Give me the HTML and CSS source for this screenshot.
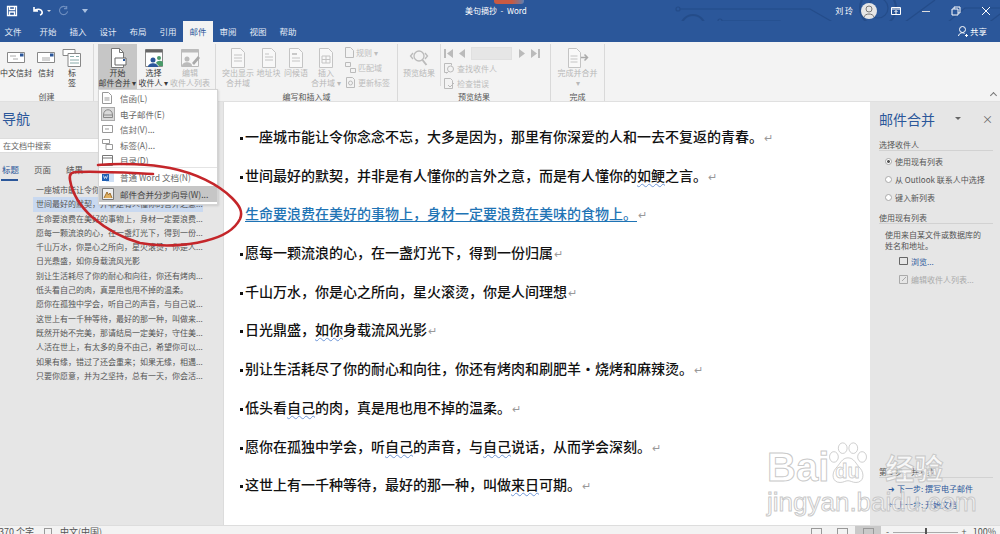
FILE: index.html
```html
<!DOCTYPE html>
<html lang="zh-CN">
<head>
<meta charset="utf-8">
<title>美句摘抄 - Word</title>
<link rel="stylesheet" href="styles.css">
</head>
<body>
<div class="app">
  <header class="title-bar">
    <svg class="circuit" width="1000" height="42" viewBox="0 0 1000 42" fill="none" stroke="#234a86" stroke-width="1.2">
      <path d="M680 9H810L850 32H900"/><circle cx="678" cy="9" r="2"/>
      <path d="M722 21H780L815 41"/><circle cx="720" cy="21" r="2"/>
      <path d="M670 39H740"/><circle cx="693" cy="27" r="12" stroke-width="2"/><path d="M689 23h7v7M689 23l9 10"/>
      <circle cx="878" cy="8" r="18" stroke-width="2"/><circle cx="878" cy="8" r="10"/>
      <path d="M905 22L935 0M925 41L965 8H1000M965 41L1000 14"/>
    </svg>
    <div class="quick">
      <svg width="12" height="12" viewBox="0 0 12 12" fill="none" stroke="#fff" stroke-width="1.3"><path d="M1.5 1.5h9v9h-9zM3.5 1.5v3h5v-3M3.5 10.5v-3.500h5v3.500"/></svg>
      <svg class="undo" width="12" height="12" viewBox="0 0 12 12" fill="none" stroke="#fff" stroke-width="1.6"><path d="M2 2v4h4M2 6c2-2.500 7-2.500 8 .5 .5 1.500-.5 3-2 3.500"/></svg>
      <span class="caret-w"></span>
      <svg class="redo" width="11" height="11" viewBox="0 0 12 12" fill="none" stroke="#6f8fc0" stroke-width="1.2"><path d="M9.500 3A4.500 4.500 0 1 0 10.500 7M9.500 1v3h-3"/></svg>
      <span class="caret-q"></span>
    </div>
    <div class="doc-title"><span class="red-tag"></span>美句摘抄&nbsp; - &nbsp;Word</div>
    <div class="window-tools">
      <span class="user">刘 玲</span>
      <svg class="avatar" width="16" height="16" viewBox="0 0 16 16"><circle cx="8" cy="8" r="8" fill="#e6e6e6"/><circle cx="8" cy="6" r="3" fill="none" stroke="#777" stroke-width="1"/><path d="M3 14c1-4 9-4 10 0" fill="none" stroke="#777" stroke-width="1"/></svg>
      <svg class="win-btn" width="10" height="10" viewBox="0 0 10 10" fill="none" stroke="#fff"><path d="M.5 1.500h9v7h-9zM.5 3h9"/><path d="M5 8V4.500M3.500 6L5 4.500 6.500 6"/></svg>
      <svg class="win-btn" width="10" height="10" viewBox="0 0 10 10" stroke="#ddd"><path d="M1 5.500h8"/></svg>
      <svg class="win-btn" width="10" height="10" viewBox="0 0 10 10" fill="none" stroke="#fff"><path d="M1 3h6v6H1zM3 3V1h6v6H7"/></svg>
      <svg class="win-btn" width="10" height="10" viewBox="0 0 10 10" stroke="#fff"><path d="M1 1l8 8M9 1l-8 8"/></svg>
    </div>
  </header>
  <nav class="tabs">
    <span class="tab tab-file">文件</span>
    <span class="tab">开始</span>
    <span class="tab">插入</span>
    <span class="tab">设计</span>
    <span class="tab">布局</span>
    <span class="tab">引用</span>
    <span class="tab tab-active">邮件</span>
    <span class="tab">审阅</span>
    <span class="tab">视图</span>
    <span class="tab">帮助</span>
    <span class="share">
      <svg width="10" height="11" viewBox="0 0 10 11" fill="none" stroke="#fff"><circle cx="4.500" cy="3.500" r="3"/><path d="M.5 10c.5-3 4-4 6-2.500M7 9.500h3M8.500 8v3"/></svg>
      共享
    </span>
  </nav>
  <section class="ribbon">
    <div class="group g1">
      <div class="group-body">
        <div class="rb w32"><svg class="ri" width="20" height="20" viewBox="0 0 20 20"><path d="M1.500 4.500h17v10h-17z" fill="#fff" stroke="#888"/><path d="M14 5.500h3.500v3H14z" fill="#2b579a"/><path d="M4 8h6M7 11h5" stroke="#aaa"/></svg><span>中文信封</span></div>
        <div class="rb w28"><svg class="ri" width="20" height="20" viewBox="0 0 20 20"><path d="M1.500 4.500h17v10h-17z" fill="#fff" stroke="#888"/><path d="M14 5.500h3.500v3H14z" fill="#2b579a"/><path d="M6 10h8M6 12h8" stroke="#aaa"/></svg><span>信封</span></div>
        <div class="rb w24"><svg class="ri" width="20" height="20" viewBox="0 0 20 20" fill="#fff" stroke="#888"><path d="M1 1.500h12v6H1z"/><path d="M6 5.500h12.500v13H6z"/><path d="M8 8.500h4M14 8.500h3M8 12h9M8 15h9" stroke="#8aa"/></svg><span>标<br>签</span></div>
      </div>
      <div class="group-label">创建</div>
    </div>
    <div class="group g2">
      <div class="group-body">
        <div class="rb rb-on w39"><svg class="ri" width="20" height="20" viewBox="0 0 20 20"><path d="M3.500 .5h8l4 4v15h-12z" fill="#fff" stroke="#777"/><path d="M11.500 .5v4h4" fill="none" stroke="#777"/><path d="M7 10h11v7H7z" fill="#fff" stroke="#666"/><path d="M15 11h2v2h-2z" fill="#2b579a"/></svg><span>开始<br>邮件合并 ▾</span></div>
        <div class="rb w33"><svg class="ri" width="20" height="20" viewBox="0 0 20 20"><path d="M1.500 1.500h17v17h-17z" fill="#fff" stroke="#888"/><path d="M1.500 1.500h17v3h-17z" fill="#666"/><circle cx="9" cy="12" r="2.500" fill="#2b579a"/><path d="M4 19c0-5 10-5 10 0z" fill="#2b579a"/><circle cx="15" cy="10" r="2" fill="#4a9a6a"/><path d="M12 15c1-3 7-3 7 0v3h-4z" fill="#4a9a6a"/></svg><span>选择<br>收件人 ▾</span></div>
        <div class="rb rb-off w40"><svg class="ri" width="20" height="20" viewBox="0 0 20 20"><path d="M1.500 1.500h17v17h-17z" fill="#f6f6f6" stroke="#bbb"/><path d="M1.500 1.500h17v3h-17z" fill="#bbb"/><circle cx="7" cy="11" r="2.500" fill="#bbb"/><path d="M2 18c0-5 10-5 10 0z" fill="#bbb"/><path d="M12 15l6-7 2 2-6 7z" fill="#aaa"/></svg><span>编辑<br>收件人列表</span></div>
      </div>
      <div class="group-label">&nbsp;</div>
    </div>
    <div class="group g3">
      <div class="group-body">
        <div class="rb rb-off w32"><svg class="ri" width="20" height="20" viewBox="0 0 20 20" fill="none" stroke="#c4c4c4"><path d="M3.500 .5h9l4 4v15h-13z" fill="#f8f8f8"/><path d="M6 7h8M6 10h8M6 13h8"/></svg><span>突出显示<br>合并域</span></div>
        <div class="rb rb-off w29"><svg class="ri" width="20" height="20" viewBox="0 0 20 20" fill="none" stroke="#c4c4c4"><path d="M3.500 .5h9l4 4v15h-13z" fill="#f8f8f8"/><path d="M6 6h4M6 9h8M6 12h8"/></svg><span>地址块</span></div>
        <div class="rb rb-off w26"><svg class="ri" width="20" height="20" viewBox="0 0 20 20" fill="none" stroke="#c4c4c4"><path d="M3.500 .5h9l4 4v15h-13z" fill="#f8f8f8"/><path d="M6 6h5" stroke="#999"/><path d="M6 10h8M6 13h8"/></svg><span>问候语</span></div>
        <div class="rb rb-off w34"><svg class="ri" width="20" height="20" viewBox="0 0 20 20" fill="none" stroke="#c4c4c4"><path d="M3.500 .5h9l4 4v15h-13z" fill="#f8f8f8"/><path d="M6 8h8v7H6zM10 8v7M6 11.500h8"/></svg><span>插入<br>合并域 ▾</span></div>
        <div class="rb-col">
          <div class="rb-row"><svg width="9" height="11" viewBox="0 0 9 11" fill="none" stroke="#bbb"><path d="M.5.5h5l3 3v7h-8z"/></svg><span>规则 ▾</span></div>
          <div class="rb-row"><svg width="11" height="11" viewBox="0 0 11 11" fill="none" stroke="#bbb"><path d="M.5.5h5v4h-5zM5.500 6.500h5v4h-5z"/></svg><span>匹配域</span></div>
          <div class="rb-row"><svg width="11" height="11" viewBox="0 0 11 11" fill="none" stroke="#bbb"><path d="M1.500.5h6l2 2v8h-8z"/><circle cx="5.500" cy="6" r="2"/></svg><span>更新标签</span></div>
        </div>
      </div>
      <div class="group-label">编写和插入域</div>
    </div>
    <div class="group g4">
      <div class="group-body">
        <div class="rb rb-off w34 sep-right"><svg class="ri" width="20" height="20" viewBox="0 0 20 20" fill="none" stroke="#bbb" stroke-width="1.300"><circle cx="10" cy="8" r="5"/><path d="M13.500 12l4 5" stroke-width="2"/><path d="M4 5L1.500 8 4 11M16 5l2.500 3L16 11"/></svg><span>预览结果</span></div>
        <div class="rb-col col-preview">
          <div class="pager">
            <svg width="9" height="9" viewBox="0 0 9 9" fill="#bbb"><path d="M0 0h2v9H0zM9 0v9L3 4.500z"/></svg>
            <svg class="pg-prev" width="7" height="9" viewBox="0 0 7 9" fill="#bbb"><path d="M6 0v9L0 4.500z"/></svg>
            <span class="pg-box"></span>
            <svg class="pg-next" width="7" height="9" viewBox="0 0 7 9" fill="#bbb"><path d="M1 0v9l6-4.500z"/></svg>
            <svg class="pg-last" width="9" height="9" viewBox="0 0 9 9" fill="#bbb"><path d="M7 0h2v9H7zM0 0v9l6-4.500z"/></svg>
          </div>
          <div class="rb-row"><svg width="11" height="11" viewBox="0 0 11 11" fill="none" stroke="#bbb"><path d="M.5.5h7v2M.5.5v9h3"/><circle cx="6.500" cy="6" r="3"/><path d="M4.500 8.500l-2 2"/></svg><span>查找收件人</span></div>
          <div class="rb-row"><svg width="11" height="11" viewBox="0 0 11 11" fill="none" stroke="#bbb"><path d="M.5.5h6l2 2v8h-8z"/><path d="M4 7l2 2 4-4"/></svg><span>检查错误</span></div>
        </div>
      </div>
      <div class="group-label">预览结果</div>
    </div>
    <div class="group g5">
      <div class="group-body">
        <div class="rb rb-off w52"><svg class="ri wide" width="22" height="20" viewBox="0 0 22 20" fill="none" stroke="#c4c4c4"><path d="M1.500 .5h8l4 4v15h-12z" fill="#f8f8f8"/><path d="M3.500 8h7M3.500 11h7M3.500 14h7"/><path d="M14 9.500h6M17.500 6.500l3 3-3 3" stroke="#aaa" stroke-width="1.500"/></svg><span>完成并合并<br>▾</span></div>
      </div>
      <div class="group-label">完成</div>
    </div>
    <span class="collapse"></span>
  </section>

  <main class="workspace">
    <aside class="nav-pane">
      <h2 class="nav-title">导航</h2>
      <div class="search">在文档中搜索</div>
      <div class="nav-tabs"><span class="nav-tab nav-tab-on">标题</span><span class="nav-tab">页面</span><span class="nav-tab">结果</span></div>
      <ul class="heads">
        <li>一座城市能让令你念念不忘，大多是因为，那里...</li>
        <li class="head-on">世间最好的默契，并非是有人懂你的言外之意...</li>
        <li>生命要浪费在美好的事物上，身材一定要浪费...</li>
        <li>愿每一颗流浪的心，在一盏灯光下，得到一份...</li>
        <li>千山万水，你是心之所向，星火滚烫，你是人...</li>
        <li>日光鼎盛，如你身载流风光影</li>
        <li>别让生活耗尽了你的耐心和向往，你还有烤肉...</li>
        <li>低头看自己的肉，真是甩也甩不掉的温柔。</li>
        <li>愿你在孤独中学会，听自己的声音，与自己说...</li>
        <li>这世上有一千种等待，最好的那一种，叫做来...</li>
        <li>既然开始不完美，那请结局一定美好，守住美...</li>
        <li>人活在世上，有太多的身不由己，希望你可以...</li>
        <li>如果有缘，错过了还会重来；如果无缘，相遇...</li>
        <li>只要你愿意，并为之坚持，总有一天，你会活...</li>
      </ul>
    </aside>
    <article class="doc">
      <p>一座城市能让令你念念不忘，大多是因为，那里有你深爱的人和一去不复返的青春。<i>↵</i></p>
      <p>世间最好的默契，并非是有人懂你的言外之意，而是有人懂你的<u>如鲠</u>之言。<i>↵</i></p>
      <p class="link-line"><b>生命要浪费在美好的事物上，身材一定要浪费在美味的食物上。</b><i>↵</i></p>
      <p>愿每一颗流浪的心，在一盏灯光下，得到一份归属<i>↵</i></p>
      <p>千山万水，你是心之所向，星火滚烫，你是人间理想<i>↵</i></p>
      <p>日光鼎盛，<u>如你</u>身载流风光影<i>↵</i></p>
      <p>别让生活耗尽了你的耐心和向往，你还有烤肉和刷肥羊·烧烤和麻辣烫。<i>↵</i></p>
      <p>低头看<u>自己</u>的肉，真是甩也甩不掉的温柔。<i>↵</i></p>
      <p>愿你在孤独中学会，听<u>自己</u>的声音，与<u>自己</u>说话，从而学会深刻。<i>↵</i></p>
      <p>这世上有一千种等待，最好的那一种，叫做<u>来日</u>可期。<i>↵</i></p>
    </article>
    <aside class="task-pane">
      <div class="task-head"><h2>邮件合并</h2><span class="task-caret"></span><span class="task-close">×</span></div>
      <div class="task-section">选择收件人</div>
      <div class="radio radio-on"><span></span>使用现有列表</div>
      <div class="radio"><span></span>从 Outlook 联系人中选择</div>
      <div class="radio"><span></span>键入新列表</div>
      <div class="task-section second">使用现有列表</div>
      <p class="task-desc">使用来自某文件或数据库的<br>姓名和地址。</p>
      <div class="task-link"><svg width="9" height="8" viewBox="0 0 9 8" fill="none" stroke="#666"><path d="M.5.5h8v7h-8z"/></svg>浏览...</div>
      <div class="task-link off"><svg width="9" height="9" viewBox="0 0 9 9" fill="none" stroke="#aaa"><path d="M.5.5h8v8h-8zM3 6l4-4"/></svg>编辑收件人列表...</div>
      <div class="task-foot">
        <div class="task-section">第 3 步，共 6 步</div>
        <div class="step"><em>➜</em>下一步: 撰写电子邮件</div>
        <div class="step"><em>←</em>上一步: 开始文档</div>
      </div>
    </aside>
  </main>

  <footer class="status">
    <span class="st-words">370 个字</span>
    <span class="st-book"></span>
    <span class="st-lang">中文(中国)</span>
    <div class="st-right">
      <span class="view"></span><span class="view"></span><span class="view view-on"></span>
      <span class="zoom-minus">-</span><span class="slider"><span class="thumb"></span></span><span class="zoom-plus">+</span>
      <span class="zoom-val">100%</span>
    </div>
  </footer>

  <div class="menu">
    <div class="mi"><svg width="10" height="12" viewBox="0 0 10 12" fill="#fff" stroke="#999"><path d="M.5.5h6l3 3v8h-9z"/><path d="M2.500 6h5M2.500 8h5"/></svg><span>信函(L)</span></div>
    <div class="mi"><svg class="mi-boxed" width="12" height="12" viewBox="0 0 12 12" fill="none" stroke="#888"><path d="M1.500 7c0-7 9-7 9 0v2.500h-9zM1.500 7h9"/></svg><span>电子邮件(E)</span></div>
    <div class="mi"><svg width="11" height="8" viewBox="0 0 11 8" fill="#fff" stroke="#999"><path d="M.5.5h10v7H.5zM3 4h4"/></svg><span>信封(V)...</span></div>
    <div class="mi"><svg width="11" height="11" viewBox="0 0 11 11" fill="#fff" stroke="#999"><path d="M.5.5h7v4h-7zM4 5.500h6.500v5H4z"/></svg><span>标签(A)...</span></div>
    <div class="mi mi-end"><svg width="11" height="11" viewBox="0 0 11 11" fill="#fff" stroke="#777"><path d="M.5.5h10v10H.5zM.5 3h10"/></svg><span>目录(D)</span></div>
    <div class="mi"><svg width="12" height="11" viewBox="0 0 12 11"><path d="M4 1h8v9H4z" fill="#cfe0f5"/><path d="M0 2h7v7H0z" fill="#1f5fb4"/><path d="M1.500 3.500l1 3 1-2 1 2 1-3" fill="none" stroke="#fff" stroke-width=".7"/></svg><span>普通 Word 文档(N)</span></div>
    <div class="mi mi-on"><svg width="12" height="12" viewBox="0 0 12 12" fill="#eee" stroke="#777"><path d="M.5.5h11v11H.5z"/><path d="M2 10l3-6 1.500 3L8 5l2 5" fill="#e0b060" stroke="#a07030"/></svg><span>邮件合并分步向导(W)...</span></div>
  </div>

  <svg class="scribble" width="260" height="260" viewBox="0 0 260 260" fill="none">
    <path d="M98 165C120 163 150 164 170 168C195 173 218 184 232 198C240 206 243 212 240 219C235 229 222 237 205 241C185 246 160 247 140 243C122 238 105 228 92 217C80 206 72 192 70 180C69 174 71 172 78 172C100 171 130 173 153 174" stroke="#c4262a" stroke-width="2.600" stroke-linecap="round"/>
  </svg>

  <div class="watermark">
    <div class="wm-top">
      <span class="wm-bai">Bai</span>
      <div class="wm-paw">
        <svg width="44" height="44" viewBox="0 0 50 50" fill="rgba(255,255,255,.7)" stroke="rgba(195,195,195,.9)"><ellipse cx="9" cy="17" rx="5" ry="6"/><ellipse cx="19" cy="7" rx="5" ry="6"/><ellipse cx="31" cy="7" rx="5" ry="6"/><ellipse cx="41" cy="17" rx="5" ry="6"/><path d="M25 18c-7 0-9 7-14 12-5 6-4 16 5 16 4 0 6-2 9-2s5 2 9 2c9 0 10-10 5-16-5-5-7-12-14-12z"/></svg>
        <span class="wm-du">du</span>
      </div>
      <span class="wm-cn">经验</span>
    </div>
    <div class="wm-url">jingyan.baidu.com</div>
  </div>
</div>
</body>
</html>
```
FILE: styles.css
```css
* { box-sizing: border-box; }
html, body { margin: 0; padding: 0; }
body { font-family: "Noto Sans CJK SC", "Liberation Sans", sans-serif; color: #444; background: #fff; }
.app { position: relative; width: 1000px; height: 534px; overflow: hidden; display: flex; flex-direction: column; }
ul, h2, p { margin: 0; padding: 0; }

.title-bar { position: relative; height: 21px; flex: none; background: #2b579a; color: #fff; display: flex; align-items: center; }
.circuit { position: absolute; left: 0; top: 0; opacity: .8; }
.quick { position: relative; width: 200px; display: flex; align-items: center; padding-left: 6px; }
.undo { margin-left: 14px; }
.caret-w { width: 0; height: 0; border: 2px solid transparent; border-top: 2px solid #ddd; margin: 2px 0 0 3px; }
.redo { margin-left: 7px; }
.caret-q { width: 0; height: 0; border: 3px solid transparent; border-top: 4px solid #a9c0e0; margin: 3px 0 0 13px; }
.doc-title { position: relative; margin-left: 265px; font-size: 8px; line-height: 21px; white-space: nowrap; }
.red-tag { position: absolute; left: 29px; top: 0; width: 30px; height: 4px; border-radius: 0 0 3px 3px; background: linear-gradient(90deg, #c85a42 60%, #5f7fb0); }
.window-tools { position: absolute; right: 0; top: 0; height: 21px; display: flex; align-items: center; }
.user { font-size: 8px; position: relative; }
.avatar { margin: 0 14px 0 8px; position: relative; }
.win-btn { position: relative; margin-right: 20px; }
.win-btn:last-child { margin-right: 9px; }

.tabs { position: relative; height: 21px; flex: none; background: #2b579a; display: flex; align-items: stretch; font-size: 8.500px; color: #e4ebf6; }
.tab { width: 30px; line-height: 21px; text-align: center; position: relative; }
.tab-file { width: 26px; margin-right: 7px; }
.tab-active { background: #f3f3f3; color: #2b579a; }
.share { position: absolute; right: 13px; top: 0; line-height: 21px; display: flex; align-items: center; gap: 2px; color: #fff; }

.ribbon { position: relative; flex: none; height: 60px; background: #f3f3f3; display: flex; border-bottom: 1px solid #e0e0e0; font-size: 8px; line-height: 10px; }
.group { flex: none; display: flex; flex-direction: column; margin-top: 2px; height: 57px; border-right: 1px solid #d9d9d9; }
.group-body { height: 45px; display: flex; }
.group-label { text-align: center; height: 12px; line-height: 15px; color: #555; font-size: 8px; }
.g1 { width: 94px; }
.g2 { width: 122px; padding-left: 4px; }
.g3 { width: 182px; padding-left: 6px; }
.g3 .group-label { margin-left: -6px; }
.g4 { width: 153px; padding-left: 4px; }
.g4 .group-label { margin-left: -4px; }
.g5 { width: 54px; border-right: 1px solid #d9d9d9; }
.rb { flex: none; height: 45px; display: flex; flex-direction: column; align-items: center; padding-top: 4px; text-align: center; white-space: nowrap; color: #3a3a3a; }
.ri { flex: none; margin-bottom: 0; }
.rb-on { background: #c6c6c6; }
.rb-off { color: #b8b8b8; }
.w24 { width: 24px; } .w26 { width: 26px; } .w28 { width: 28px; } .w29 { width: 29px; }
.w32 { width: 32px; } .w33 { width: 33px; } .w34 { width: 34px; } .w39 { width: 39px; } .w40 { width: 40px; } .w52 { width: 53px; }
.rb-col { display: flex; flex-direction: column; margin-left: 2px; padding-top: 3px; gap: 4px; color: #bdbdbd; }
.rb-row { height: 11px; display: flex; align-items: center; gap: 2px; white-space: nowrap; }
.col-preview { margin-left: 4px; padding-left: 3px; border-left: 1px solid #dcdcdc; height: 42px; gap: 4px; }
.pager { height: 12px; display: flex; align-items: center; }
.pg-prev { margin-left: 6px; }
.pg-box { width: 41px; height: 13px; margin-left: 5px; background: #e6e6e6; border: 1px solid #e0e0e0; }
.pg-next { margin-left: 6px; }
.pg-last { margin-left: 6px; }
.collapse { position: absolute; right: 4px; bottom: 3px; width: 5px; height: 5px; border-left: 1px solid #777; border-top: 1px solid #777; transform: rotate(45deg); }

.workspace { flex: 1; min-height: 0; display: flex; }
.nav-pane { width: 224px; flex: none; background: #e6e6e6; border-right: 1px solid #dcdcdc; padding-top: 6px; }
.nav-title { font-size: 14px; line-height: 20px; font-weight: 400; color: #2b579a; padding-left: 2px; }
.search { margin-top: 10px; width: 110px; height: 15px; background: #fff; border: 1px solid #ddd; border-left: 0; font-size: 8px; line-height: 13px; padding-left: 3px; color: #666; }
.nav-tabs { display: flex; margin-top: 10px; font-size: 8.500px; line-height: 12px; color: #555; }
.nav-tab { width: 32px; padding-left: 2px; height: 18px; }
.nav-tab-on { color: #2b579a; position: relative; }
.nav-tab-on::after { content: ""; position: absolute; left: 1px; top: 16px; width: 17px; height: 2px; background: #2b579a; }
.heads { list-style: none; margin-top: 2px; font-size: 8px; line-height: 14.300px; color: #555; }
.heads li { padding-left: 36px; white-space: nowrap; height: 14.300px; }
.heads .head-on { background: #c9d9f0; margin: 0 20px 0 33px; padding-left: 3px; }

.doc { flex: 1; min-width: 0; background: #fff; padding-top: 15px; color: #111; font-size: 14px; font-weight: 500; overflow: hidden; }
.doc p { position: relative; height: 38.700px; line-height: 38.700px; padding-left: 21px; white-space: nowrap; }
.doc p::before { content: ""; position: absolute; left: 16px; top: 20px; width: 3px; height: 3px; background: #111; }
.doc i { font-style: normal; font-weight: 400; color: #999; font-size: 11px; margin-left: 1px; }
.doc u { text-decoration: underline wavy #6f96d6 1px; text-underline-offset: 2px; }
.link-line b { font-weight: 500; color: #1f74b5; text-decoration: underline; text-underline-offset: 2px; }
.doc .link-line::before { background: #fff; }

.task-pane { width: 130px; flex: none; background: #e6e6e6; padding: 0 7px 0 9px; font-size: 8px; color: #555; position: relative; }
.task-head { display: flex; align-items: center; height: 32px; padding-top: 2px; }
.task-head h2 { font-size: 14px; font-weight: 400; color: #2b579a; width: 78px; }
.task-caret { width: 0; height: 0; border: 3px solid transparent; border-top: 3px solid #666; margin-top: 2px; }
.task-close { margin-left: 21px; font-size: 11px; color: #666; }
.task-section { line-height: 11px; height: 12px; margin-top: 5px; border-bottom: 1px solid #d2d2d2; white-space: nowrap; }
.task-section.second { margin-top: 6px; }
.radio { display: flex; align-items: center; height: 18px; margin-left: 6px; white-space: nowrap; }
.task-section + .radio { margin-top: 1px; }
.radio span { width: 7px; height: 7px; border-radius: 50%; border: 1px solid #aaa; background: #fff; flex: none; margin-right: 3px; }
.radio-on span { background: radial-gradient(circle, #555 35%, #fff 45%); }
.task-desc { margin: 6px 0 0 6px; line-height: 10.500px; }
.task-link { display: flex; align-items: center; gap: 3px; margin: 4px 0 0 20px; height: 12px; white-space: nowrap; color: #2b579a; }
.task-link.off { margin-top: 6px; color: #aaa; }
.task-foot { position: absolute; left: 9px; right: 7px; bottom: 12px; }
.task-foot .task-section { margin-bottom: 3px; height: 13px; line-height: 13px; }
.step { line-height: 16px; color: #2b579a; padding-left: 11px; white-space: nowrap; display: flex; }
.step em { font-style: normal; width: 9px; margin-left: -2px; font-size: 8px; }

.status { flex: none; position: relative; height: 9px; background: #f3f3f3; border-top: 1px solid #ddd; font-size: 9px; line-height: 12px; color: #555; display: flex; }
.st-words { margin-left: -1px; width: 45px; white-space: nowrap; }
.st-book { width: 8px; height: 8px; margin: 2px 0 0 0; border: 1px solid #999; }
.st-lang { margin-left: 8px; white-space: nowrap; }
.st-right { position: absolute; right: 4px; top: 0; display: flex; align-items: flex-start; }
.view { width: 26px; height: 9px; position: relative; }
.view::after { content: ""; position: absolute; left: 8px; top: 2px; width: 9px; height: 7px; border: 1px solid #999; }
.view-on { background: #c9c9c9; }
.zoom-minus { margin-left: 5px; width: 7px; }
.slider { position: relative; width: 65px; height: 1px; margin-top: 6px; background: #aaa; }
.thumb { position: absolute; left: 32px; top: -4px; width: 2px; height: 9px; background: #555; }
.zoom-plus { width: 12px; text-align: center; }
.zoom-val { width: 26px; text-align: right; }

.menu { position: absolute; left: 98px; top: 89px; width: 120px; height: 116px; background: #fff; border: 1px solid #d4d4d4; box-shadow: 1px 1px 2px rgba(0,0,0,.12); font-size: 8.500px; color: #666; display: flex; flex-direction: column; }
.mi { flex: none; height: 15.700px; display: flex; align-items: center; white-space: nowrap; position: relative; }
.mi svg { position: absolute; left: 3px; }
.mi span { padding-left: 21px; }
.mi-boxed { background: #d9d9d9; outline: 1px solid #aaa; }
.mi-end { margin-bottom: 1px; border-bottom: 1px solid #e4e4e4; }
.mi-on { background: #c6c6c6; color: #444; height: 16px; margin: 1px 0 0 0; }

.scribble { position: absolute; left: 0; top: 0; pointer-events: none; }

.watermark { position: absolute; left: 767px; top: 442px; width: 200px; pointer-events: none; }
.wm-top { display: flex; align-items: flex-start; height: 46px; }
.wm-bai { font-family: "Liberation Sans", sans-serif; font-size: 40px; line-height: 50px; font-weight: 700; color: rgba(255,255,255,.75); -webkit-text-stroke: 1px rgba(195,195,195,.9); }
.wm-paw { position: relative; width: 44px; height: 44px; margin-left: -3px; flex: none; }
.wm-du { position: absolute; left: 9px; top: 17px; font-family: "Liberation Sans", sans-serif; font-size: 20px; line-height: 24px; font-weight: 700; color: rgba(255,255,255,.6); -webkit-text-stroke: .8px rgba(195,195,195,.9); }
.wm-cn { font-size: 29px; line-height: 50px; font-weight: 700; margin-left: 15px; color: rgba(255,255,255,.7); -webkit-text-stroke: 1px rgba(195,195,195,.9); white-space: nowrap; }
.wm-url { font-family: "Liberation Sans", sans-serif; font-size: 26px; line-height: 28px; color: rgba(255,255,255,.6); -webkit-text-stroke: 1px rgba(195,195,195,.9); white-space: nowrap; }
```
